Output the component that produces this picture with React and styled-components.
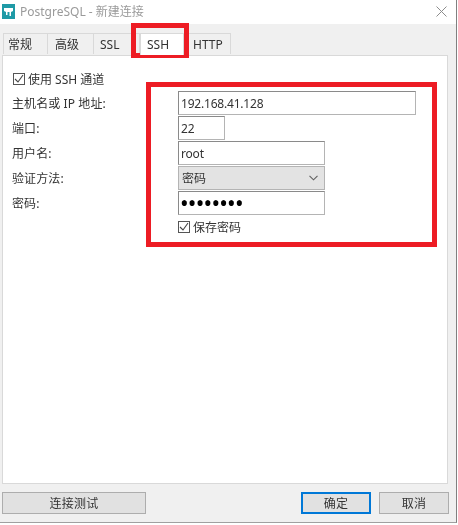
import React from 'react'
import styled, { createGlobalStyle } from 'styled-components'

const GlobalStyle = createGlobalStyle`
  html, body { margin: 0; padding: 0; background: #fff; }
  * { box-sizing: border-box; }
`

const Screen = styled.div`
  position: relative;
  width: 458px;
  height: 525px;
  overflow: hidden;
  background: #fff;
  color: #333;
  font-family: "Noto Sans", "Noto Sans CJK SC", sans-serif;
  font-size: 12px;
  filter: blur(0.4px);
`

const Dialog = styled.div`
  width: 457px;
  height: 523px;
  display: flex;
  flex-direction: column;
  border-right: 1px solid #808080;
  border-bottom: 1px solid #a0a0a0;
`

const TitleBar = styled.div`
  height: 24px;
  flex: none;
  display: flex;
  align-items: center;
  padding: 0 9px 2px 2px;
  gap: 5px;
  background: #fff;
`

const Title = styled.span`
  flex: 1;
  font-size: 12px;
  color: #9a9a9a;
`

const Body = styled.div`
  flex: 1;
  display: flex;
  flex-direction: column;
  padding: 9px 7px 0 2px;
  background: #f0f0f0;
`

const Tabs = styled.div`
  display: flex;
  height: 22px;
  flex: none;
  padding-left: 1px;
`

const Tab = styled.div`
  width: ${(props) => props.$w}px;
  height: ${(props) => (props.$active ? 22 : 21)}px;
  display: flex;
  align-items: center;
  padding-left: ${(props) => props.$pad}px;
  background: ${(props) => (props.$active ? '#fff' : '#f0f0f0')};
  border: 1px solid #d9d9d9;
  border-left-width: ${(props) => (props.$first || props.$active ? 1 : 0)}px;
  border-bottom-width: 0;
  position: relative;
  z-index: ${(props) => (props.$active ? 1 : 0)};
`

const Panel = styled.div`
  flex: none;
  width: 446px;
  height: 429px;
  background: #fff;
  border: 1px solid #d9d9d9;
  padding: 16px 0 0 9px;
`

const CheckRow = styled.label`
  display: flex;
  align-items: center;
  gap: 3px;
  height: 14px;
  padding-left: 1px;
`

const Box = styled.span`
  width: 12px;
  height: 12px;
  flex: none;
  display: flex;
  align-items: center;
  justify-content: center;
  background: #fff;
  border: 1px solid #555;
`

const Form = styled.div`
  display: grid;
  grid-template-columns: 166px 1fr;
  grid-auto-rows: 24px;
  row-gap: 1px;
  margin-top: 5px;
  align-items: center;
`

const Label = styled.span`
  letter-spacing: 0.1px;
`

const Input = styled.input`
  display: block;
  width: ${(props) => props.$w}px;
  height: 24px;
  padding: 0 2px;
  border: 1px solid #8a8a8a;
  border-right-color: #b4b4b4;
  border-bottom-color: #b4b4b4;
  outline: none;
  background: #fff;
  color: #333;
  font-family: inherit;
  font-size: 12px;
  letter-spacing: -0.2px;
`

const Secret = styled(Input)`
  padding: 0 1px;
  font-size: 23px;
  letter-spacing: -0.8px;
  color: #000;
`

const Select = styled.div`
  width: 147px;
  height: 24px;
  display: flex;
  align-items: center;
  justify-content: space-between;
  padding: 0 6px 0 3px;
  background: #e3e3e3;
  border: 1px solid #b4b4b4;
`

const SaveRow = styled.div`
  margin: 5px 0 0 165px;
`

const Footer = styled.div`
  display: flex;
  justify-content: space-between;
  padding-top: 8px;
`

const Actions = styled.div`
  display: flex;
  gap: 8px;
`

const Button = styled.div`
  width: ${(props) => props.$w}px;
  height: 22px;
  display: flex;
  align-items: center;
  justify-content: center;
  background: #e1e1e1;
  border: ${(props) => (props.$primary ? '2px solid #0078d7' : '1px solid #adadad')};
  color: #333;
  letter-spacing: 0.2px;
`

const Highlight = styled.div`
  position: absolute;
  left: ${(props) => props.$x}px;
  top: ${(props) => props.$y}px;
  width: ${(props) => props.$w}px;
  height: ${(props) => props.$h}px;
  border: 5px solid #ed1c24;
  pointer-events: none;
`

const AppIcon = () => (
  <svg width="13" height="15" viewBox="0 0 13 15">
    <rect width="13" height="15" fill="#1f9aa6" />
    <path d="M2 4h9v3l-2 1v4H7.5V8h-2v3H4V8L2 7z" fill="#fff" />
  </svg>
)

const CloseIcon = () => (
  <svg width="11" height="11" viewBox="0 0 11 11">
    <path d="M0.5 0.5l10 10M10.5 0.5l-10 10" stroke="#8c8c8c" strokeWidth="1" fill="none" />
  </svg>
)

const Tick = () => (
  <svg width="10" height="10" viewBox="0 0 10 10">
    <path d="M1 5l3 3 5-7" stroke="#444" strokeWidth="1.1" fill="none" />
  </svg>
)

const Chevron = () => (
  <svg width="9" height="6" viewBox="0 0 9 6">
    <path d="M0.5 0.8l4 4 4-4" stroke="#606060" strokeWidth="1.1" fill="none" />
  </svg>
)

const App = () => (
  <>
    <GlobalStyle />
    <Screen>
      <Dialog>
        <TitleBar>
          <AppIcon />
          <Title>PostgreSQL - 新建连接</Title>
          <CloseIcon />
        </TitleBar>
        <Body>
          <Tabs>
            <Tab $w={45} $pad={4} $first>常规</Tab>
            <Tab $w={46} $pad={7}>高级</Tab>
            <Tab $w={46} $pad={6}>SSL</Tab>
            <Tab $w={44} $pad={6} $active>SSH</Tab>
            <Tab $w={47} $pad={9}>HTTP</Tab>
          </Tabs>
          <Panel>
            <CheckRow>
              <Box><Tick /></Box>
              使用 SSH 通道
            </CheckRow>
            <Form>
              <Label>主机名或 IP 地址:</Label>
              <Input $w={238} value="192.168.41.128" readOnly />
              <Label>端口:</Label>
              <Input $w={47} value="22" readOnly />
              <Label>用户名:</Label>
              <Input $w={147} value="root" readOnly />
              <Label>验证方法:</Label>
              <Select>
                密码
                <Chevron />
              </Select>
              <Label>密码:</Label>
              <Secret $w={147} type="password" value="12345678" readOnly />
            </Form>
            <SaveRow>
              <CheckRow>
                <Box><Tick /></Box>
                保存密码
              </CheckRow>
            </SaveRow>
          </Panel>
          <Footer>
            <Button $w={144}>连接测试</Button>
            <Actions>
              <Button $w={70} $primary>确定</Button>
              <Button $w={70}>取消</Button>
            </Actions>
          </Footer>
        </Body>
      </Dialog>
      <Highlight $x={131} $y={23} $w={58} $h={35} />
      <Highlight $x={146} $y={82} $w={291} $h={165} />
    </Screen>
  </>
)

export default App
